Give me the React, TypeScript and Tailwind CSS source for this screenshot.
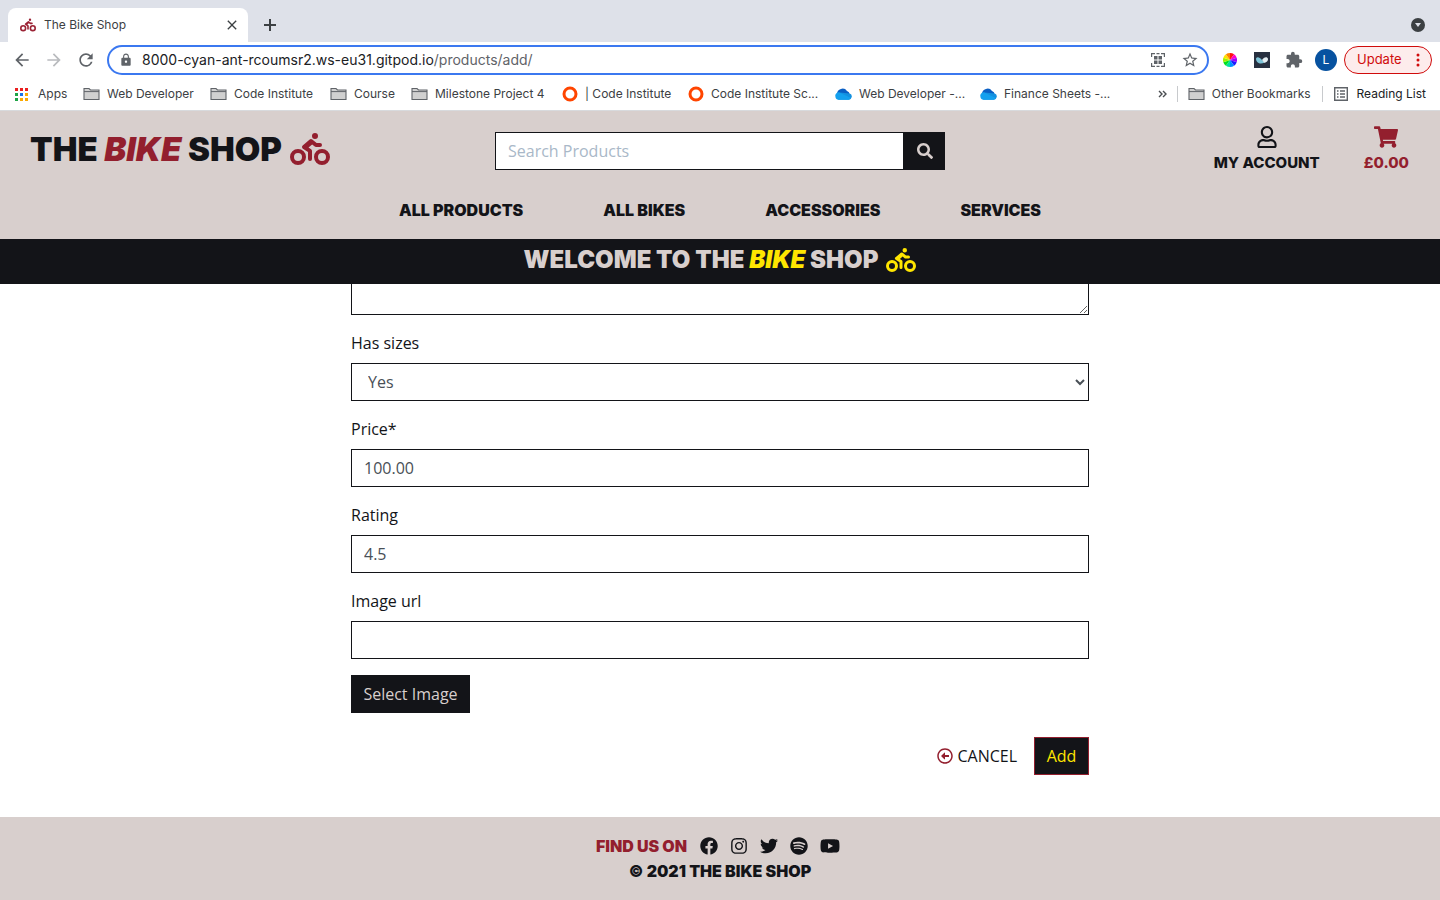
import React from "react";
import {
  FaBiking,
  FaFacebook,
  FaInstagram,
  FaRegArrowAltCircleLeft,
  FaRegUser,
  FaSearch,
  FaShoppingCart,
  FaSpotify,
  FaTwitter,
  FaYoutube,
} from "react-icons/fa";
import { MdArrowBack, MdArrowForward, MdClose, MdExtension, MdLock, MdRefresh, MdStarBorder } from "react-icons/md";

const display = "font-['Inter',sans-serif] font-black";

function FolderIcon() {
  return (
    <svg width="17" height="14" viewBox="0 0 17 14" className="shrink-0">
      <path d="M1 12.5V1.5h5l1.5 1.5H16v9.500z" fill="#d0d0d0" stroke="#5f6368" strokeWidth="1.1" />
      <path d="M1 4.600h15" stroke="#5f6368" strokeWidth="1" />
    </svg>
  );
}

function RingIcon() {
  return (
    <svg width="16" height="16" viewBox="0 0 16 16" className="shrink-0">
      <circle cx="8" cy="8" r="6" fill="none" stroke="#ff4500" strokeWidth="3" />
    </svg>
  );
}

function CloudIcon() {
  return (
    <svg width="17" height="12" viewBox="0 0 17 12" className="shrink-0">
      <path d="M2 6a5.500 5.500 0 0 1 10-3 4 4 0 0 1 2.500 4.500L8 9z" fill="#0a5fc4" />
      <path d="M4.500 4.500a4 4 0 0 0-1 7.200h10a3.200 3.200 0 0 0 1.200-6.200z" fill="#1490df" />
      <path d="M.4 8.500a3.300 3.300 0 0 1 5-3.600l10.600 5a3 3 0 0 1-2.500 1.800h-10A3.200 3.200 0 0 1 .4 8.500z" fill="#14a0ee" />
    </svg>
  );
}

function AppsIcon() {
  const colors = ["#ea1f1f", "#ea1f1f", "#ea1f1f", "#1ea446", "#1a73e8", "#fba900", "#1ea446", "#fba900", "#fba900"];
  return (
    <svg width="16" height="13" viewBox="0 0 16 13" className="shrink-0">
      {colors.map((c, i) => (
        <rect key={i} x={(i % 3) * 5} y={Math.floor(i / 3) * 5} width="3" height="3" fill={c} />
      ))}
    </svg>
  );
}

function WheelIcon() {
  const colors = ["#ff1010", "#ff00c8", "#9a00ff", "#1a1aff", "#0090ff", "#00e0a0", "#00e020", "#a0f000", "#ffe000", "#ff8000"];
  const point = (i: number) => {
    const a = (i / colors.length) * Math.PI * 2 - Math.PI / 2;
    return `${7 + 7 * Math.cos(a)} ${7 + 7 * Math.sin(a)}`;
  };
  return (
    <svg width="14" height="14" viewBox="0 0 14 14">
      {colors.map((c, i) => (
        <path key={c} d={`M7 7L${point(i)}A7 7 0 0 1 ${point(i + 1)}z`} fill={c} />
      ))}
    </svg>
  );
}

const bookmarks = [
  { label: "Apps", icon: <AppsIcon />, width: "w-[68px]" },
  { label: "Web Developer", icon: <FolderIcon />, width: "w-[127px]" },
  { label: "Code Institute", icon: <FolderIcon />, width: "w-[120px]" },
  { label: "Course", icon: <FolderIcon />, width: "w-[81px]" },
  { label: "Milestone Project 4", icon: <FolderIcon />, width: "w-[151px]" },
  { label: "| Code Institute", icon: <RingIcon />, width: "w-[126px]" },
  { label: "Code Institute Sc...", icon: <RingIcon />, width: "w-[147px]" },
  { label: "Web Developer -...", icon: <CloudIcon />, width: "w-[145px]" },
  { label: "Finance Sheets -...", icon: <CloudIcon />, width: "w-[145px]" },
];

function BrowserChrome() {
  return (
    <div className="shrink-0 border-b border-[#d8dadd] bg-white font-['Inter',sans-serif] text-[12px] text-[#3c4043]">
      <div className="flex h-[42px] items-end bg-[#dee1e9] pl-2">
        <div className="flex h-[34px] w-60 items-center rounded-t-lg bg-white pr-2 pl-3">
          <FaBiking className="mr-2 size-4 text-[#9b2335]" />
          <span className="flex-1">The Bike Shop</span>
          <button aria-label="Close tab">
            <MdClose className="size-4" />
          </button>
        </div>
        <button aria-label="New tab" className="ml-4 flex h-[34px] items-center">
          <svg width="12" height="12" viewBox="0 0 12 12">
            <path d="M6 0v12M0 6h12" stroke="#3c4043" strokeWidth="2" />
          </svg>
        </button>
        <button aria-label="Search tabs" className="mr-[15px] ml-auto flex h-[34px] items-center">
          <svg width="14" height="14" viewBox="0 0 14 14">
            <circle cx="7" cy="7" r="7" fill="#3c4043" />
            <path d="M4 5h6l-3 4z" fill="#dee1e9" />
          </svg>
        </button>
      </div>
      <div className="flex h-9 items-center pr-2 pl-3">
        <button aria-label="Back"><MdArrowBack className="size-5 text-[#5f6368]" /></button>
        <button aria-label="Forward" className="ml-3"><MdArrowForward className="size-5 text-[#b9bbbe]" /></button>
        <button aria-label="Reload" className="ml-3"><MdRefresh className="size-5 text-[#5f6368]" /></button>
        <div className="ml-[11px] flex h-[30px] flex-1 items-center rounded-full border-2 border-[#3b78f0] pr-2 pl-2.5 text-[14px] leading-5">
          <MdLock className="mr-[9px] size-3.5 text-[#5f6368]" />
          <p className="flex-1 text-[#5f6368]">
            <span className="text-[#202124]">8000-cyan-ant-rcoumsr2.ws-eu31.gitpod.io</span>/products/add/
          </p>
          <svg width="14" height="14" viewBox="0 0 14 14" className="mr-4">
            <path d="M.6 4V.6H4M10 .6h3.400V4M13.400 10v3.400H10M4 13.400H.6V10M5.500 .6h3M5.500 13.400h3" fill="none" stroke="#5f6368" strokeWidth="1.200" />
            <path d="M3 3h3.500v3.500H3zM7.500 3H11v3.500H7.500zM3 7.500h3.500V11H3zM7.500 7.500H11V11H7.500z" fill="#5f6368" />
          </svg>
          <button aria-label="Bookmark this tab"><MdStarBorder className="size-[18px] text-[#5f6368]" /></button>
        </div>
        <div className="ml-3.5 flex items-center">
          <WheelIcon />
          <svg width="16" height="16" viewBox="0 0 16 16" className="ml-[17px]">
            <path d="M0 0h16v16H0z" fill="#283040" />
            <path d="M2 6.500C3 4.500 5.500 5 8 8c1 1.200 2 2 2.500 2.500C7 12.500 2 11.500 2 6.500z" fill="#7ec4d8" />
            <path d="M8 8c1.500-3 5.500-4 6-1 .2 2-2 3.800-4 3.800z" fill="#e4eef2" />
          </svg>
          <MdExtension className="ml-[15px] size-[18px] text-[#5f6368]" />
          <span className="ml-3 flex size-[22px] items-center justify-center rounded-full bg-[#0752a0] text-white">L</span>
        </div>
        <button className="ml-[7px] flex h-7 w-[88px] items-center justify-between rounded-full border border-[#d00b0b] bg-[#fdecec] pr-[11px] pl-3 text-[13px] text-[#d00b0b]">
          Update
          <svg width="4" height="14" viewBox="0 0 4 14" fill="#d00b0b">
            <circle cx="2" cy="2" r="1.500" />
            <circle cx="2" cy="7" r="1.500" />
            <circle cx="2" cy="12" r="1.500" />
          </svg>
        </button>
      </div>
      <div className="flex h-8 items-center pr-3.5 pl-[15px]">
        {bookmarks.map((b) => (
          <a key={b.label} href="#" className={`flex shrink-0 items-center gap-[7px] whitespace-nowrap ${b.width}`}>
            {b.icon}
            <span>{b.label}</span>
          </a>
        ))}
        <button className="ml-auto" aria-label="More bookmarks">
          <svg width="9" height="8" viewBox="0 0 9 8">
            <path d="M1 1l3 3-3 3M5 1l3 3-3 3" fill="none" stroke="#4a4d51" strokeWidth="1.400" />
          </svg>
        </button>
        <a href="#" className="ml-2.5 flex h-4 items-center gap-[7px] border-l border-[#c8cacd] pl-2.5 whitespace-nowrap">
          <FolderIcon />
          Other Bookmarks
        </a>
        <a href="#" className="ml-[11px] flex h-4 items-center gap-[9px] border-l border-[#c8cacd] pl-[11px] whitespace-nowrap text-[#202124]">
          <svg width="14" height="14" viewBox="0 0 14 14">
            <path d="M.7.7h12.600v12.600H.7z" fill="none" stroke="#5f6368" strokeWidth="1.400" />
            <path d="M3 4h1.500M6 4h5M3 7h1.500M6 7h5M3 10h1.500M6 10h5" stroke="#5f6368" strokeWidth="1.400" />
          </svg>
          Reading List
        </a>
      </div>
    </div>
  );
}

function Header() {
  return (
    <header className={`shrink-0 bg-[#d8cfcd] ${display} text-[16px] leading-6 text-[#131418]`}>
      <div className="grid h-20 grid-cols-3">
        <a href="#" className="flex items-center gap-2 pb-1 pl-[30px] text-[33px] leading-[38px] whitespace-nowrap">
          <span>
            THE <em className="text-[#931f2e]">BIKE</em> SHOP
          </span>
          <FaBiking className="h-8 w-10 shrink-0 text-[#931f2e]" />
        </a>
        <form className="flex items-center px-[15px]" onSubmit={(e) => e.preventDefault()}>
          <input
            aria-label="Search Products"
            placeholder="Search Products"
            className="h-[38px] min-w-0 flex-1 border border-[#131418] bg-white px-3 font-['Open_Sans',sans-serif] font-normal placeholder:text-[#a9b8c8]"
          />
          <button aria-label="Search" className="flex h-[38px] w-[41px] items-center justify-center bg-[#131418] text-[#d8cfcd]">
            <FaSearch className="size-4" />
          </button>
        </form>
        <div className="flex justify-end gap-11 pt-[15px] pr-[31px] text-[15px] font-extrabold">
          <a href="#" className="flex flex-col items-center gap-[3px]">
            <FaRegUser className="h-[22px] w-5" />
            MY ACCOUNT
          </a>
          <a href="#" className="flex flex-col items-center gap-[3px] text-[#931f2e]">
            <FaShoppingCart className="h-[22px] w-6" />
            £0.00
          </a>
        </div>
      </div>
      <nav className="flex h-12 justify-center gap-20 pt-[7px]">
        <a href="#">ALL PRODUCTS</a>
        <a href="#">ALL BIKES</a>
        <a href="#">ACCESSORIES</a>
        <a href="#">SERVICES</a>
      </nav>
    </header>
  );
}

const fieldStyle = "block h-[38px] w-full border border-[#131418] bg-white px-3 text-[#495057]";

function ProductForm() {
  return (
    <form
      className="mx-auto flex w-full max-w-[738px] flex-col gap-4 font-['Open_Sans',sans-serif] text-[16px] leading-6 text-[#131418]"
      onSubmit={(e) => e.preventDefault()}
    >
      <textarea aria-label="Description" className="block h-28 w-full resize-y border border-[#131418] bg-white" />
      <div>
        <label htmlFor="sizes" className="mb-2 block">Has sizes</label>
        <select id="sizes" className={fieldStyle} defaultValue="Yes">
          <option>Yes</option>
          <option>No</option>
        </select>
      </div>
      <div>
        <label htmlFor="price" className="mb-2 block">Price*</label>
        <input id="price" className={fieldStyle} defaultValue="100.00" />
      </div>
      <div>
        <label htmlFor="rating" className="mb-2 block">Rating</label>
        <input id="rating" className={fieldStyle} defaultValue="4.5" />
      </div>
      <div>
        <label htmlFor="image-url" className="mb-2 block">Image url</label>
        <input id="image-url" className={fieldStyle} />
      </div>
      <button className="h-[38px] w-[119px] bg-[#131418] whitespace-nowrap text-[#d8cfcd]">Select Image</button>
      <div className="mt-2 flex items-center justify-end gap-[17px]">
        <a href="#" className="flex items-center gap-1">
          <FaRegArrowAltCircleLeft className="size-4 text-[#931f2e]" />
          CANCEL
        </a>
        <button className="h-[38px] w-[55px] border border-[#931f2e] bg-[#131418] font-medium text-[#ffe600]">Add</button>
      </div>
    </form>
  );
}

function Footer() {
  return (
    <footer className={`flex h-[83px] shrink-0 flex-col items-center bg-[#d8cfcd] pt-[17px] ${display} text-[16px] leading-[25px] text-[#131418]`}>
      <div className="flex items-center pr-1">
        <span className="mr-[13px] text-[#931f2e]">FIND US ON</span>
        <div className="flex items-center gap-3 pb-0.5">
          <a href="#" aria-label="Facebook"><FaFacebook className="size-[18px]" /></a>
          <a href="#" aria-label="Instagram"><FaInstagram className="size-[18px]" /></a>
          <a href="#" aria-label="Twitter"><FaTwitter className="size-[18px]" /></a>
          <a href="#" aria-label="Spotify"><FaSpotify className="size-[18px]" /></a>
          <a href="#" aria-label="YouTube"><FaYoutube className="h-[18px] w-5" /></a>
        </div>
      </div>
      <p>© 2021 THE BIKE SHOP</p>
    </footer>
  );
}

export default function App() {
  return (
    <div className="flex h-screen flex-col overflow-hidden bg-white">
      <BrowserChrome />
      <Header />
      <div className={`flex h-[45px] shrink-0 items-center justify-center gap-2 bg-[#131418] pb-1 text-[24px] whitespace-nowrap text-[#d8cfcd] ${display}`}>
        <h1>
          WELCOME TO THE <em className="text-[#ffe600]">BIKE</em> SHOP
        </h1>
        <FaBiking className="h-6 w-[30px] text-[#ffe600]" />
      </div>
      <main className="flex min-h-0 flex-1 flex-col justify-end overflow-hidden pb-[42px]">
        <ProductForm />
      </main>
      <Footer />
    </div>
  );
}
